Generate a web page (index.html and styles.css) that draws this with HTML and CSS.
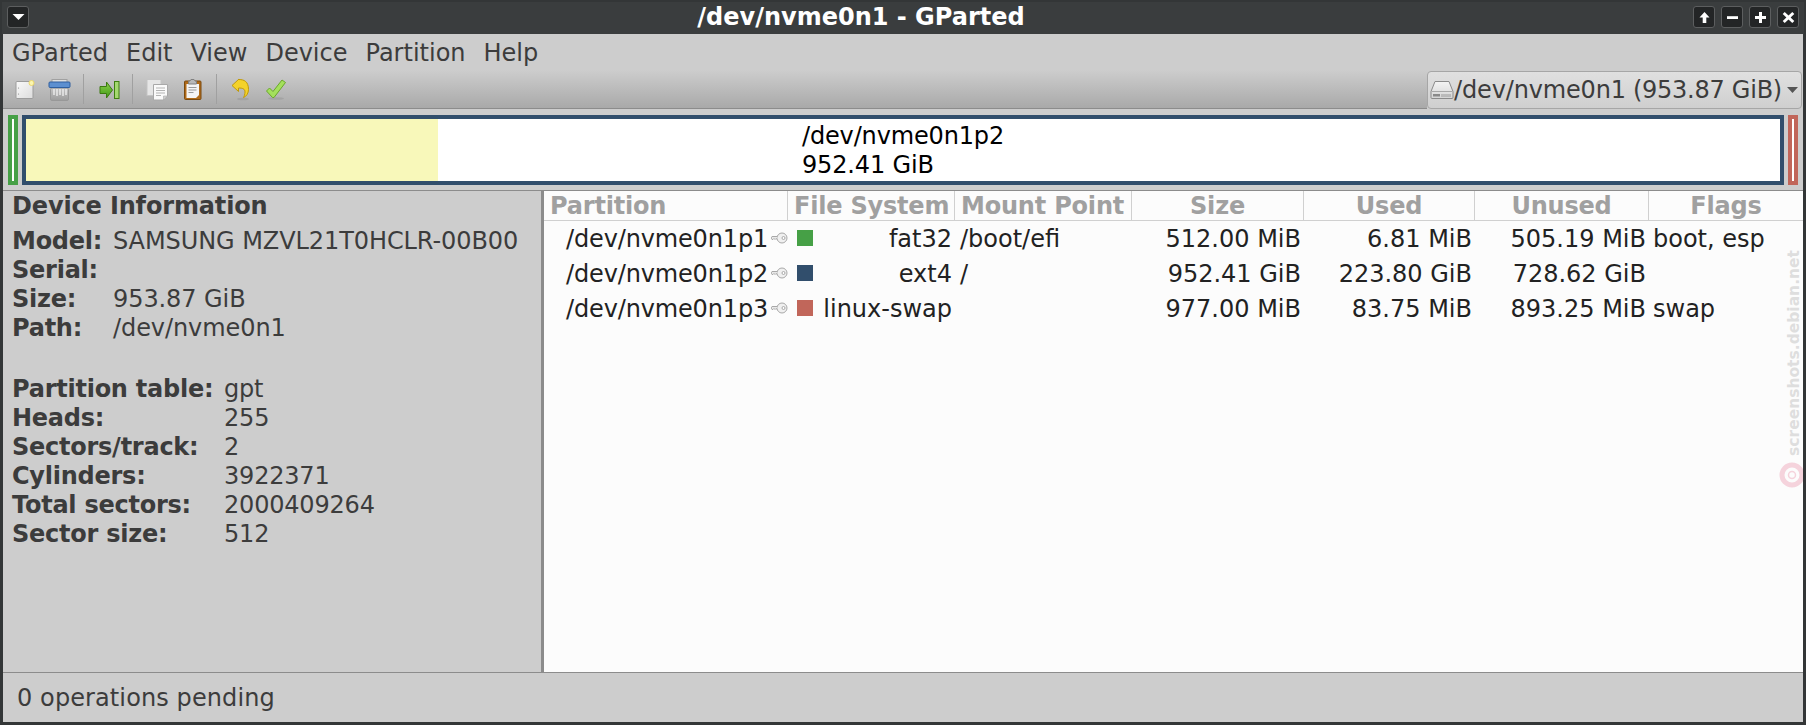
FILE: index.html
```html
<!DOCTYPE html>
<html lang="en">
<head>
<meta charset="utf-8">
<title>/dev/nvme0n1 - GParted</title>
<link rel="stylesheet" href="styles.css">
</head>
<body>
<div class="window">
  <header class="titlebar">
    <div class="wm-btn"><svg width="13" height="8" viewBox="0 0 13 8"><path d="M0.5 1h12L6.5 7z" fill="#fff"/></svg></div>
    <div class="title">/dev/nvme0n1 - GParted</div>
    <div class="wm-group">
      <div class="wm-btn"><svg width="13" height="13" viewBox="0 0 13 13"><path d="M6.5 1 1.5 6.5h3.2V12h3.6V6.5h3.2z" fill="#fff"/></svg></div>
      <div class="wm-btn"><svg width="13" height="13" viewBox="0 0 13 13"><rect x="1" y="5.2" width="11" height="2.8" fill="#fff"/></svg></div>
      <div class="wm-btn"><svg width="13" height="13" viewBox="0 0 13 13"><path d="M5 1h3v4h4v3H8v4H5V8H1V5h4z" fill="#fff"/></svg></div>
      <div class="wm-btn"><svg width="13" height="13" viewBox="0 0 13 13"><path d="M2.7 1 6.5 4.6 10.3 1 12.3 3 8.6 6.5 12.3 10 10.3 12 6.5 8.4 2.7 12 .7 10 4.4 6.5 .7 3z" fill="#fff"/></svg></div>
    </div>
  </header>

  <nav class="menubar">
    <span class="menu-item">GParted</span>
    <span class="menu-item">Edit</span>
    <span class="menu-item">View</span>
    <span class="menu-item">Device</span>
    <span class="menu-item">Partition</span>
    <span class="menu-item">Help</span>
  </nav>

  <div class="toolrow">
    <div class="toolbar">
      <div class="tool">
        <svg width="24" height="24" viewBox="0 0 24 24"><defs><linearGradient id="pg" x1="0" y1="0" x2="1" y2="1"><stop offset="0" stop-color="#fafafa"/><stop offset="1" stop-color="#dcdcdc"/></linearGradient></defs><rect x="3" y="4.500" width="17" height="17" rx="1" fill="url(#pg)" stroke="#9c9c9c"/><circle cx="5.500" cy="11" r=".6" fill="#888"/><circle cx="5.500" cy="17" r=".6" fill="#888"/><circle cx="18.500" cy="6" r="2.500" fill="#fbf6b0" stroke="#ecd76a"/></svg>
      </div>
      <div class="tool">
        <svg width="24" height="24" viewBox="0 0 24 24"><defs><linearGradient id="sg" x1="0" y1="0" x2="0" y2="1"><stop offset="0" stop-color="#c4c4c4"/><stop offset="1" stop-color="#9c9c9c"/></linearGradient></defs><rect x="4" y="2.500" width="15" height="4" fill="#e0e0e0" stroke="#a0a0a0"/><rect x="2.500" y="11" width="18" height="12.500" rx="1.500" fill="url(#sg)" stroke="#989898"/><path d="M6 12v6M9 12v7M12 12v6M15 12v7M18 12v6" stroke="#f2f2f2" stroke-width="1.300"/><rect x="1" y="5" width="21" height="5.500" rx="1" fill="#5c8fd0" stroke="#2f5f9f"/></svg>
      </div>
      <div class="tool-sep"></div>
      <div class="tool">
        <svg width="24" height="24" viewBox="0 0 24 24"><defs><linearGradient id="ag" x1="0" y1="0" x2="0" y2="1"><stop offset="0" stop-color="#8ed04a"/><stop offset="1" stop-color="#3f9a18"/></linearGradient></defs><path d="M3 9.500h6.500V5L15.500 13l-6 8v-4.500H3z" fill="url(#ag)" stroke="#3c7a10"/><rect x="17.500" y="4.500" width="4.500" height="17" fill="#a4d870" stroke="#3f7f10"/></svg>
      </div>
      <div class="tool-sep"></div>
      <div class="tool">
        <svg width="24" height="24" viewBox="0 0 24 24"><rect x="1" y="2.500" width="14" height="16" fill="#e6e6e6" stroke="#c4c4c4"/><path d="M7.500 7.500h14v11.500l-4 4h-10z" fill="#fafafa" stroke="#a8a8a8"/><path d="M17.500 23v-4h4z" fill="#d0d0d0" stroke="#a8a8a8" stroke-width=".6"/><path d="M10 11h9M10 13.500h9M10 16h9M10 18.500h5" stroke="#b4b4b4"/></svg>
      </div>
      <div class="tool">
        <svg width="24" height="24" viewBox="0 0 24 24"><rect x="3.500" y="4" width="16.500" height="18.500" rx="1" fill="#b06a18" stroke="#7a4a10"/><path d="M5.500 7h12.500v11l-3 3H5.500z" fill="#f4f4f4"/><path d="M7.500 10.500h8M7.500 13h8M7.500 15.500h5" stroke="#9a9a9a"/><path d="M7.500 7V4.500c1-.5 2-.5 2.500-2h3c.5 1.500 1.500 1.500 2.500 2V7z" fill="#b8b8b8" stroke="#808080"/></svg>
      </div>
      <div class="tool-sep"></div>
      <div class="tool">
        <svg width="24" height="24" viewBox="0 0 24 24"><ellipse cx="13" cy="22" rx="6" ry="1.300" fill="#9a9a9a" opacity=".6"/><path d="M9 2 2 8.500l6.500 6V11c4 0 6.500.8 6.500 4 0 2.500-1 4.500-1.500 5.500 3-1 5-4.500 5-8C18.500 4.500 14 2.500 9 2.500z" fill="#f4d22a" stroke="#c09a08"/></svg>
      </div>
      <div class="tool">
        <svg width="24" height="24" viewBox="0 0 24 24"><ellipse cx="11" cy="21.500" rx="8" ry="1.300" fill="#9a9a9a" opacity=".6"/><path d="M1.500 14 4.500 11l3.500 3.500L17 3l3.500 2.500L9 20.500H7.500z" fill="#a4e05c" stroke="#6aa82a"/></svg>
      </div>
    </div>
    <div class="combo">
      <svg class="drive" width="24" height="20" viewBox="0 0 24 20"><defs><linearGradient id="dg" x1="0" y1="0" x2="0" y2="1"><stop offset="0" stop-color="#f4f4f4"/><stop offset="1" stop-color="#d4d4d4"/></linearGradient></defs><path d="M5 1.500h14l4 10v6a1 1 0 0 1-1 1H2a1 1 0 0 1-1-1v-6z" fill="url(#dg)" stroke="#8a8a8a"/><path d="M1.500 11.500h21" stroke="#a8a8a8"/><rect x="3" y="14" width="7" height="2.500" fill="#8a8a8a"/><path d="M12 14v3M14 14v3M16 14v3M18 14v3M20 14v3" stroke="#9a9a9a"/></svg>
      <span class="combo-name">/dev/nvme0n1</span>
      <span class="combo-size">(953.87 GiB)</span>
      <svg class="combo-arrow" width="11" height="6" viewBox="0 0 11 6"><path d="M0 0h11L5.500 6z" fill="#555"/></svg>
    </div>
  </div>

  <section class="diskmap">
    <div class="part part-small part-green"></div>
    <div class="part part-main">
      <div class="part-label">/dev/nvme0n1p2<br>952.41 GiB</div>
    </div>
    <div class="part part-small part-red"></div>
  </section>

  <main class="panes">
    <aside class="info">
      <h2 class="info-title">Device Information</h2>
      <dl class="info-grid info-device">
        <dt>Model:</dt><dd>SAMSUNG MZVL21T0HCLR-00B00</dd>
        <dt>Serial:</dt><dd></dd>
        <dt>Size:</dt><dd>953.87 GiB</dd>
        <dt>Path:</dt><dd>/dev/nvme0n1</dd>
      </dl>
      <dl class="info-grid info-table">
        <dt>Partition table:</dt><dd>gpt</dd>
        <dt>Heads:</dt><dd>255</dd>
        <dt>Sectors/track:</dt><dd>2</dd>
        <dt>Cylinders:</dt><dd>3922371</dd>
        <dt>Total sectors:</dt><dd>2000409264</dd>
        <dt>Sector size:</dt><dd>512</dd>
      </dl>
    </aside>
    <section class="list">
      <div class="row head">
        <div class="th">Partition</div>
        <div class="th">File System</div>
        <div class="th">Mount Point</div>
        <div class="th th-c">Size</div>
        <div class="th th-c">Used</div>
        <div class="th th-c">Unused</div>
        <div class="th th-c th-last">Flags</div>
      </div>
      <div class="row body">
        <div class="td td-name"><span>/dev/nvme0n1p1</span><svg class="key" width="17" height="12" viewBox="0 0 17 12"><circle cx="11" cy="6" r="5" fill="#f0f0f0" stroke="#a8a8a8"/><circle cx="12.500" cy="6" r="1.500" fill="#fff" stroke="#a8a8a8"/><path d="M6.500 4.500H1L0 6l1 1.500h1l1-1 1 1 1-1 1.500 1" fill="#e8e8e8" stroke="#a8a8a8"/></svg></div>
        <div class="td td-fs"><i class="swatch sw-green"></i><span>fat32</span></div>
        <div class="td">/boot/efi</div>
        <div class="td td-r">512.00 MiB</div>
        <div class="td td-r">6.81 MiB</div>
        <div class="td td-r">505.19 MiB</div>
        <div class="td td-flags">boot, esp</div>
      </div>
      <div class="row body">
        <div class="td td-name"><span>/dev/nvme0n1p2</span><svg class="key" width="17" height="12" viewBox="0 0 17 12"><circle cx="11" cy="6" r="5" fill="#f0f0f0" stroke="#a8a8a8"/><circle cx="12.500" cy="6" r="1.500" fill="#fff" stroke="#a8a8a8"/><path d="M6.500 4.500H1L0 6l1 1.500h1l1-1 1 1 1-1 1.500 1" fill="#e8e8e8" stroke="#a8a8a8"/></svg></div>
        <div class="td td-fs"><i class="swatch sw-blue"></i><span>ext4</span></div>
        <div class="td">/</div>
        <div class="td td-r">952.41 GiB</div>
        <div class="td td-r">223.80 GiB</div>
        <div class="td td-r">728.62 GiB</div>
        <div class="td td-flags"></div>
      </div>
      <div class="row body">
        <div class="td td-name"><span>/dev/nvme0n1p3</span><svg class="key" width="17" height="12" viewBox="0 0 17 12"><circle cx="11" cy="6" r="5" fill="#f0f0f0" stroke="#a8a8a8"/><circle cx="12.500" cy="6" r="1.500" fill="#fff" stroke="#a8a8a8"/><path d="M6.500 4.500H1L0 6l1 1.500h1l1-1 1 1 1-1 1.500 1" fill="#e8e8e8" stroke="#a8a8a8"/></svg></div>
        <div class="td td-fs"><i class="swatch sw-red"></i><span>linux-swap</span></div>
        <div class="td"></div>
        <div class="td td-r">977.00 MiB</div>
        <div class="td td-r">83.75 MiB</div>
        <div class="td td-r">893.25 MiB</div>
        <div class="td td-flags">swap</div>
      </div>
      <div class="watermark">
        <span class="wm-text">screenshots.debian.net</span>
        <svg class="wm-logo" width="24" height="26" viewBox="0 0 24 26"><circle cx="13" cy="13" r="10" fill="none" stroke="#f5d3dc" stroke-width="5"/><circle cx="13" cy="13" r="3.500" fill="none" stroke="#f5d3dc" stroke-width="1.500"/></svg>
      </div>
    </section>
  </main>

  <footer class="status">0 operations pending</footer>
</div>
</body>
</html>
```

FILE: styles.css
```css
* { box-sizing: border-box; }
html, body { margin: 0; padding: 0; }
body {
  width: 1806px;
  height: 725px;
  overflow: hidden;
  font-family: "DejaVu Sans", sans-serif;
  font-size: 24px;
  color: #3c3c3c;
  background: #888;
}
.window {
  width: 1806px;
  height: 725px;
  display: flex;
  flex-direction: column;
  border-style: solid;
  border-color: #333637;
  border-width: 2px 3px 3px 3px;
  background: #cdcdcd;
}

/* title bar */
.titlebar {
  height: 32px;
  margin: 0 -1px;
  flex: none;
  display: flex;
  align-items: center;
  padding: 0 5px 2px 5px;
  background: #3a3d3e;
}
.title {
  flex: 1;
  text-align: center;
  color: #fff;
  font-weight: bold;
  font-size: 24px;
  line-height: 30px;
  white-space: nowrap;
}
.wm-group { display: flex; gap: 6px; }
.wm-btn {
  width: 22px;
  height: 22px;
  display: flex;
  align-items: center;
  justify-content: center;
  background: #232526;
  border: 1px solid #5c5e5f;
  border-radius: 3px;
}

/* menu */
.menubar {
  height: 36px;
  flex: none;
  display: flex;
  align-items: center;
  gap: 18px;
  padding: 2px 0 0 9px;
  font-size: 24px;
}

/* toolbar */
.toolrow {
  height: 39px;
  flex: none;
  display: flex;
}
.toolbar {
  flex: 1;
  display: flex;
  align-items: center;
  padding-left: 4px;
  background: linear-gradient(#cdcdcd, #a9a9a9);
  border-bottom: 1px solid #8c8c8c;
}
.tool {
  width: 35px;
  height: 30px;
  display: flex;
  align-items: center;
  justify-content: center;
}
.tool-sep {
  width: 1px;
  height: 30px;
  margin: 0 7px 0 6px;
  background: #a0a0a0;
}
.combo {
  width: 375px;
  height: 38px;
  margin: 1px 1px 0 0;
  flex: none;
  display: flex;
  align-items: center;
  padding-left: 2px;
  background: linear-gradient(#e0e0e0, #cfcfcf);
  border: 1px solid #a6a6a6;
  border-radius: 4px;
  font-size: 24px;
  white-space: nowrap;
}
.drive { flex: none; }
.combo-name { margin-right: 7px; letter-spacing: -0.15px; }
.combo-size { letter-spacing: -0.25px; }
.combo-arrow { margin-left: 5px; flex: none; }

/* disk map */
.diskmap {
  height: 82px;
  flex: none;
  display: flex;
  align-items: center;
  padding: 1px 5px 0 5px;
  gap: 4px;
  border-bottom: 1px solid #8c8c8c;
}
.part { height: 70px; }
.part-small {
  width: 10px;
  border: 4px solid;
  background: #fff;
}
.part-green { border-color: #46a046; }
.part-red { border-color: #c1665a; }
.part-main {
  flex: 1;
  display: flex;
  justify-content: center;
  align-items: center;
  border: 4px solid #314e6c;
  background: linear-gradient(to right, #f8f8ba 412px, #fff 412px);
}
.part-label {
  color: #000;
  font-size: 24px;
  line-height: 29px;
  padding-top: 1px;
  letter-spacing: -0.15px;
  white-space: nowrap;
}

/* panes */
.panes {
  flex: 1;
  min-height: 0;
  display: flex;
  border-bottom: 1px solid #8c8c8c;
}
.info {
  width: 541px;
  flex: none;
  padding: 1px 0 0 9px;
  border-right: 3px solid #8c8c8c;
  line-height: 29px;
  letter-spacing: -0.08px;
}
.info-title {
  margin: 0;
  font-size: 24px;
  font-weight: bold;
  line-height: 29px;
  letter-spacing: -0.15px;
}
.info-grid {
  display: grid;
  margin: 0;
  grid-auto-rows: 29px;
}
.info-grid dt { font-weight: bold; letter-spacing: -0.25px; }
.info-grid dd { margin: 0; }
.info-device { grid-template-columns: 101px 1fr; margin-top: 6px; }
.info-table { grid-template-columns: 212px 1fr; margin-top: 32px; letter-spacing: -0.2px; }

.list {
  position: relative;
  flex: 1;
  min-width: 0;
  background: #fcfcfc;
  color: #222;
}
.row {
  display: grid;
  grid-template-columns: 244px 167px 177px 172px 171px 174px 154px;
}
.head {
  height: 30px;
  border-bottom: 1px solid #d0d0d0;
}
.th {
  font-weight: bold;
  color: #a0a0a0;
  line-height: 30px;
  padding-left: 6px;
  border-right: 1px solid #d0d0d0;
  letter-spacing: -0.2px;
  white-space: nowrap;
}
.th-c { text-align: center; padding-left: 0; }
.th-last { border-right: 0; }
.body {
  height: 35px;
  grid-template-rows: 35px;
  line-height: 35px;
}
.td {
  height: 35px;
  white-space: nowrap;
  padding-left: 5px;
  padding-top: 1px;
}
.td-name {
  display: flex;
  align-items: flex-start;
  padding-left: 22px;
  letter-spacing: -0.15px;
}
.key { margin: 10px 0 0 3px; flex: none; }
.td-fs {
  display: flex;
  align-items: flex-start;
  justify-content: space-between;
  padding-left: 9px;
  padding-right: 3px;
}
.swatch { width: 16px; height: 16px; flex: none; margin-top: 8px; }
.sw-green { background: #46a046; }
.sw-blue { background: #314e6c; }
.sw-red { background: #c1665a; }
.td-r { text-align: right; padding-right: 3px; padding-left: 0; }
.td-flags { padding-left: 4px; }

.watermark {
  position: absolute;
  right: 0;
  top: 59px;
  width: 24px;
  display: flex;
  flex-direction: column;
  align-items: flex-end;
}
.wm-text {
  writing-mode: vertical-rl;
  transform: rotate(180deg);
  font-size: 15.500px;
  font-weight: bold;
  color: #dedede;
  line-height: 14px;
  margin-right: 2px;
}
.wm-logo { margin-top: 6px; }

/* status */
.status {
  height: 49px;
  flex: none;
  padding: 1px 0 0 14px;
  line-height: 49px;
  letter-spacing: 0.1px;
}
```
